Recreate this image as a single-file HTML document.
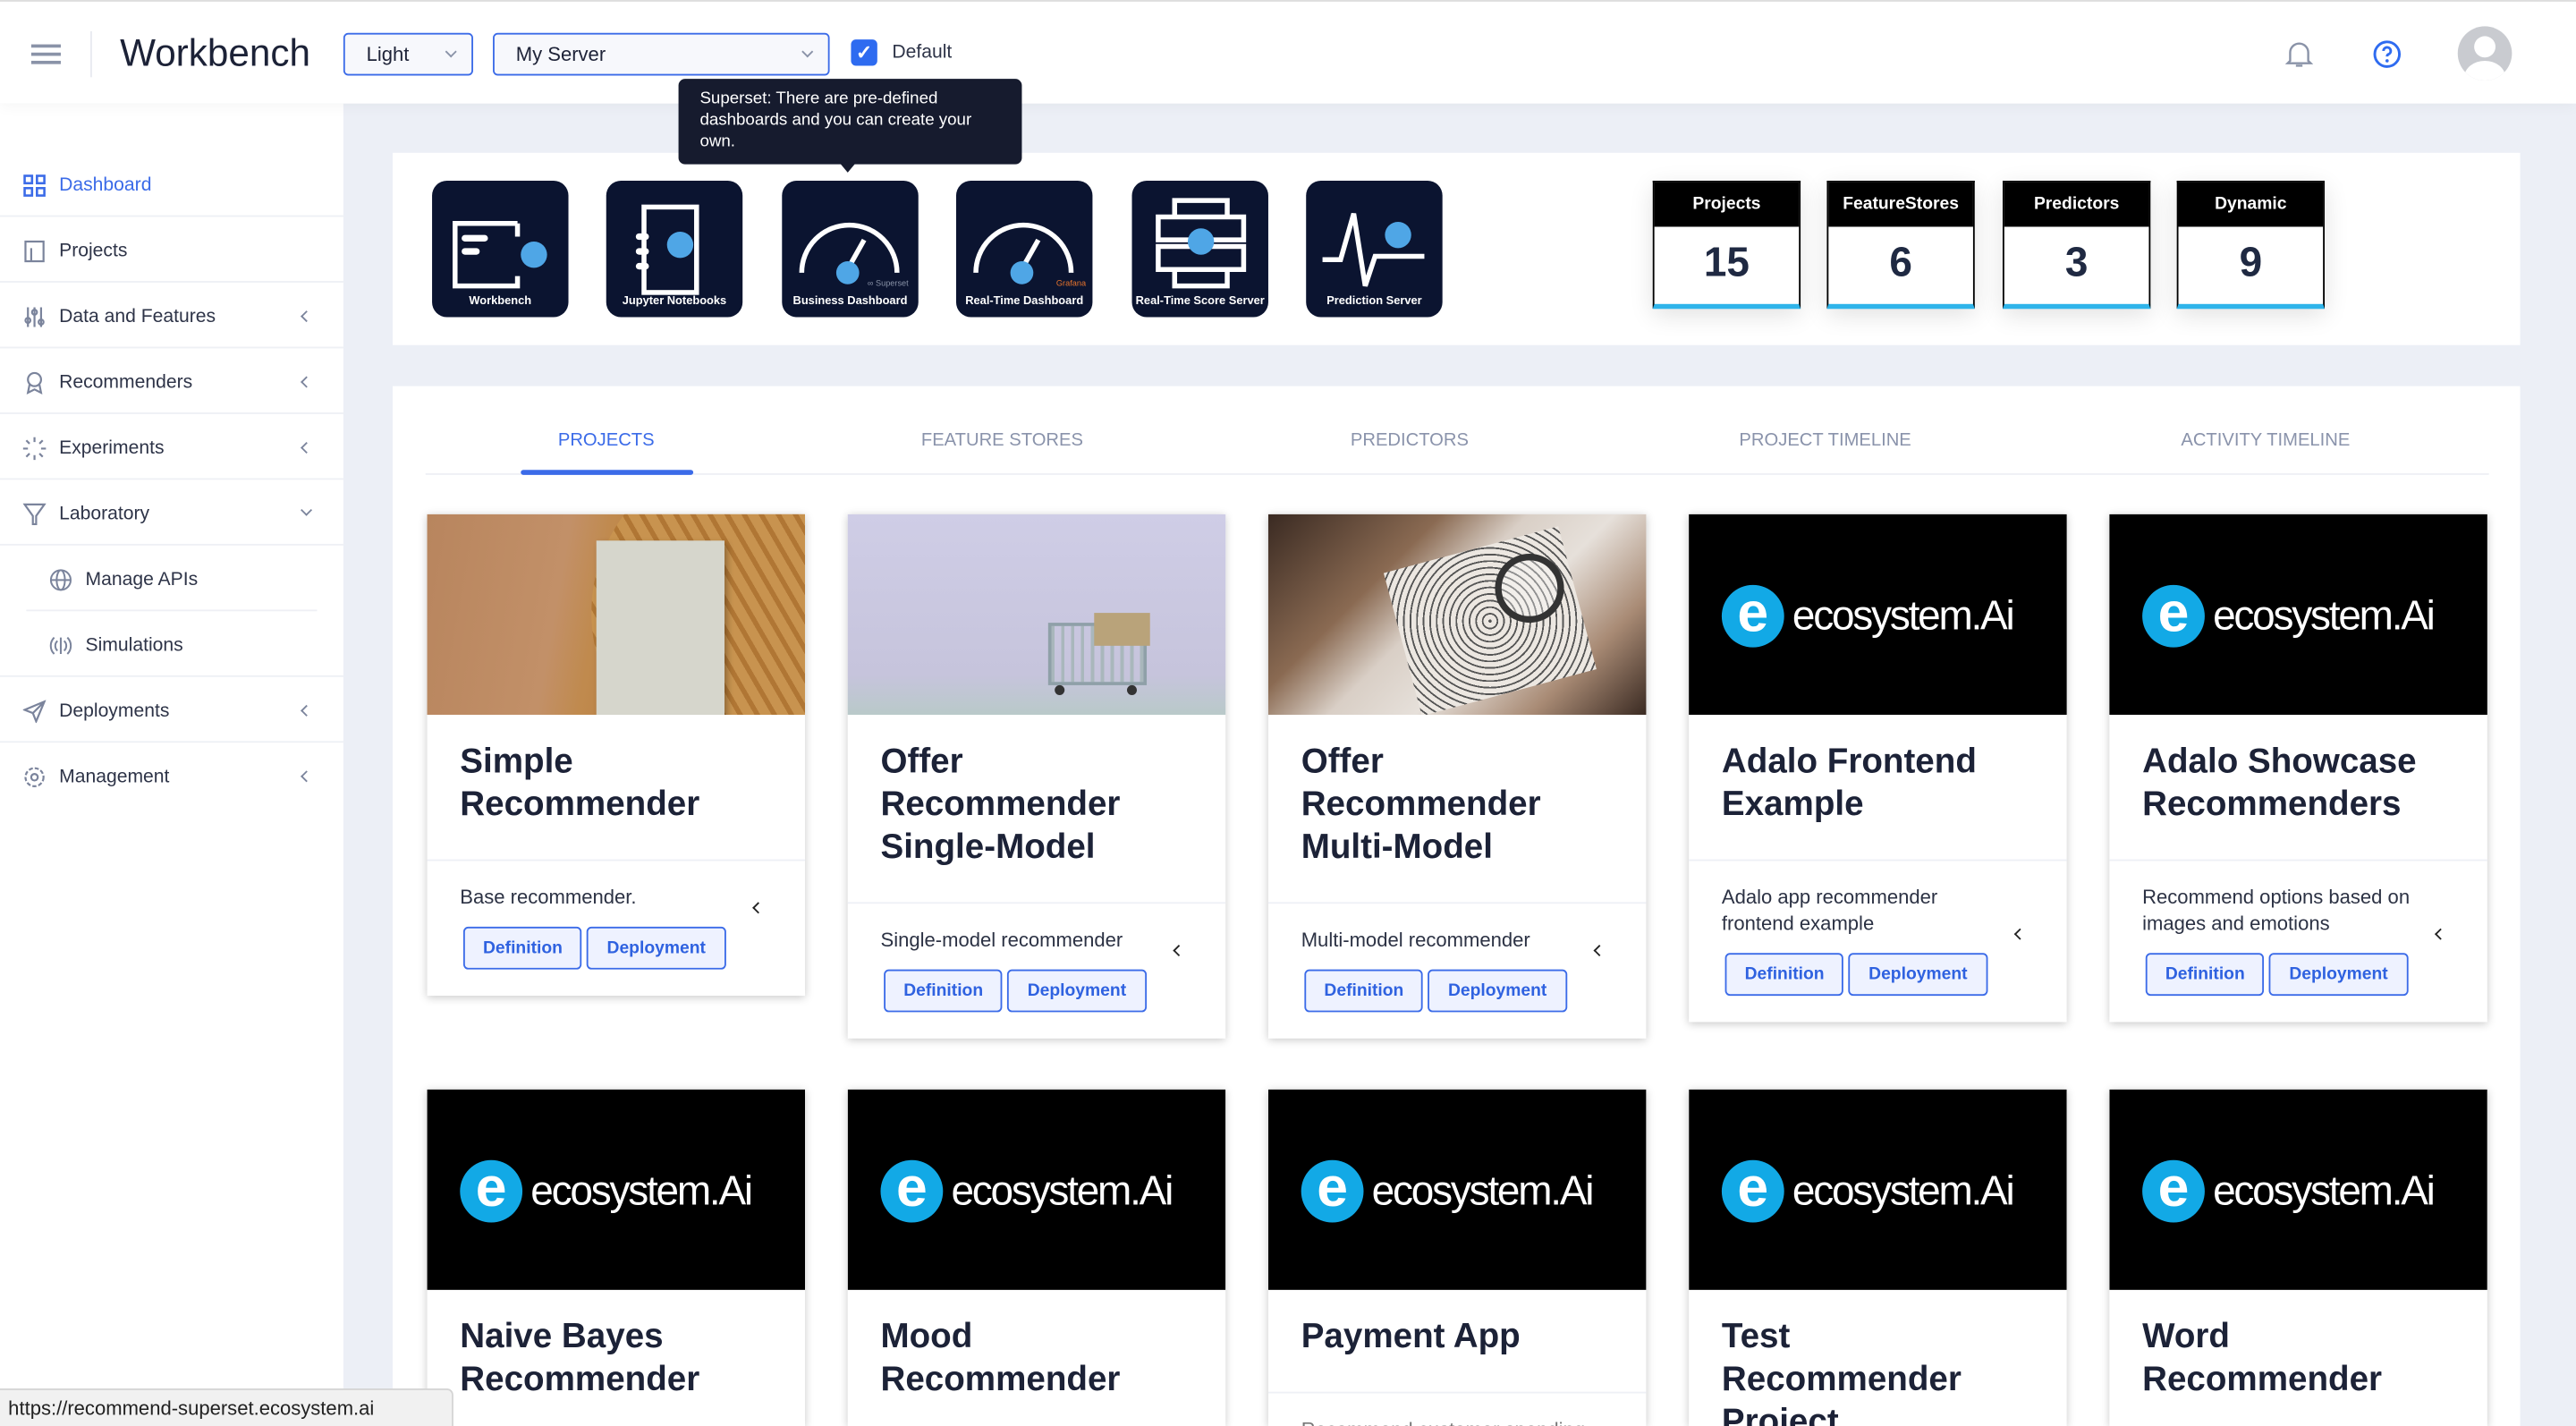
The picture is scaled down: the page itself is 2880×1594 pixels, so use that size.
<!DOCTYPE html>
<html><head><meta charset="utf-8"><style>
*{box-sizing:border-box;margin:0;padding:0}
html,body{width:2880px;height:1594px;overflow:hidden;background:#eceff6}
#w{position:absolute;left:0;top:0;width:1568px;height:868px;transform:scale(1.83674);transform-origin:0 0;font-family:"Liberation Sans",sans-serif;color:#1e2338;background:#eceff6;overflow:hidden}
.abs{position:absolute}
#hdr{left:0;top:0;width:1568px;height:63px;background:#fff;border-top:1px solid #ddd;box-shadow:0 2px 8px rgba(0,0,0,.04);z-index:2}
.sel{position:absolute;top:19px;height:26px;border:1px solid #3b6be8;border-radius:3px;background:#f7f8fc;font-size:12px;line-height:24px;padding-left:13px;color:#1e2338}
.sel:after{content:"";position:absolute;right:10px;top:8px;width:4px;height:4px;border-right:1px solid #8a93a8;border-bottom:1px solid #8a93a8;transform:rotate(45deg)}
#side{left:0;top:63px;width:209px;height:805px;background:#fff}
.si{position:absolute;left:0;width:209px;height:40px;border-bottom:1px solid #eef0f5;font-size:11.5px;line-height:42px;padding-left:36px;color:#2e3448}
.si .ic{position:absolute;left:14px;top:14px;width:14px;height:14px}
.si .ch{position:absolute;right:20px;top:18px;width:5px;height:5px;border-left:1.2px solid #7b849c;border-bottom:1.2px solid #7b849c;transform:rotate(45deg)}
.sub{padding-left:52px;left:0}
.panel{position:absolute;background:#fff;left:239px;width:1295px}
.tile{position:absolute;top:110px;width:83px;height:83px;background:#0b1430;border-radius:9px;color:#fff;font-size:7px;font-weight:bold;text-align:center}
.tile span{position:absolute;left:0;right:0;bottom:6px}
.stat{position:absolute;top:110px;width:90px;height:78px;background:#fff;border:1px solid #000;border-bottom:3px solid #2fb4ea;box-shadow:0 4px 14px rgba(0,0,0,.12)}
.stat .h{height:27px;background:#000;color:#fff;font-size:10.5px;font-weight:bold;text-align:center;line-height:27px}
.stat .n{text-align:center;font-size:25px;font-weight:bold;color:#1f2942;line-height:44px}
.tab{position:absolute;top:262px;font-size:11px;color:#8a93ab;transform:translateX(-50%);white-space:nowrap}
.card{position:absolute;width:230px;background:#fff;box-shadow:0 1px 5px rgba(0,0,0,.22)}
.card .img{height:122px;background:#000;position:relative;overflow:hidden}
.card h3{font-size:21px;line-height:26px;font-weight:bold;color:#1c2237;padding:16px 20px 0}
.card .sep{border-top:1px solid #eef0f6;margin-top:0}
.card .d{font-size:12px;color:#2c3244;padding:14px 20px 0;line-height:16px}
.btns{padding:10px 0 0 22px;height:52px;position:relative}
.b{display:inline-block;height:26px;border:1px solid #3b6be8;border-radius:3px;background:#eef2ff;color:#2f62e0;font-size:10.5px;font-weight:bold;line-height:24px;padding:0 11px;margin-right:3px}
.chev{position:absolute;right:26px;top:-4px;width:5px;height:5px;border-left:1.6px solid #222;border-bottom:1.6px solid #222;transform:rotate(45deg)}
.logo{position:absolute;left:20px;top:42px;height:40px;display:flex;align-items:center}
.logo .c{width:38px;height:38px;border-radius:50%;background:#12a9e6;color:#fff;font-size:34px;line-height:34px;text-align:center;font-weight:bold;font-family:"Liberation Sans",sans-serif}
.logo .t{color:#fff;font-size:25px;margin-left:5px;letter-spacing:-1.2px}
</style></head><body><div id="w">

<div id="hdr" class="abs">
 <div class="abs" style="left:19px;top:26px;width:18px;height:2px;background:#8a93a8;box-shadow:0 5px 0 #8a93a8,0 10px 0 #8a93a8"></div>
 <div class="abs" style="left:55px;top:18px;width:1px;height:28px;background:#e8eaf0"></div>
 <div class="abs" style="left:73px;top:18px;font-size:23px;color:#1c2237">Workbench</div>
 <div class="sel" style="left:209px;width:79px">Light</div>
 <div class="sel" style="left:300px;width:205px">My Server</div>
 <div class="abs" style="left:518px;top:23px;width:16px;height:16px;background:#2e6bf0;border-radius:3px;color:#fff;font-size:12px;text-align:center;line-height:16px;font-weight:bold">✓</div>
 <div class="abs" style="left:543px;top:25px;font-size:11.5px;color:#2e3448">Default</div>
 <svg class="abs" style="left:1391px;top:23px" width="17" height="18" viewBox="0 0 17 18"><path d="M3 13V8a5.5 5.5 0 0 1 11 0v5l1.5 1.5h-14z M6.5 16h4" fill="none" stroke="#8a93a8" stroke-width="1.3"/></svg>
 <svg class="abs" style="left:1444px;top:23px" width="18" height="18" viewBox="0 0 18 18"><circle cx="9" cy="9" r="7.5" fill="none" stroke="#2e6bf0" stroke-width="1.6"/><path d="M6.8 7a2.2 2.2 0 1 1 2.9 2.1c-.6.3-.7.7-.7 1.3" fill="none" stroke="#2e6bf0" stroke-width="1.6"/><circle cx="9" cy="13" r="1" fill="#2e6bf0"/></svg>
 <div class="abs" style="left:1496px;top:15px;width:33px;height:33px;border-radius:50%;background:#c9cbd0;overflow:hidden"><div class="abs" style="left:10px;top:6px;width:13px;height:13px;border-radius:50%;background:#fff"></div><div class="abs" style="left:4px;top:21px;width:25px;height:20px;border-radius:50%;background:#fff"></div></div>
</div>

<div id="side" class="abs">
 <div class="si" style="top:29px;color:#3b6be8"><svg class="ic" viewBox="0 0 14 14"><g fill="none" stroke="#3b6be8" stroke-width="1.4"><rect x="1" y="1" width="4.5" height="4.5"/><rect x="8.5" y="1" width="4.5" height="4.5"/><rect x="1" y="8.5" width="4.5" height="4.5"/><rect x="8.5" y="8.5" width="4.5" height="4.5"/></g></svg>Dashboard</div>
 <div class="si" style="top:69px"><svg class="ic" viewBox="0 0 14 14"><g fill="none" stroke="#7b849c" stroke-width="1.2"><rect x="1.5" y="1" width="11" height="12"/><path d="M5 5v8"/></g></svg>Projects</div>
 <div class="si" style="top:109px"><svg class="ic" viewBox="0 0 14 14"><g fill="none" stroke="#7b849c" stroke-width="1.2"><path d="M3 1v12M7 1v12M11 1v12"/><circle cx="3" cy="9" r="1.5"/><circle cx="7" cy="4" r="1.5"/><circle cx="11" cy="10" r="1.5"/></g></svg>Data and Features<span class="ch"></span></div>
 <div class="si" style="top:149px"><svg class="ic" viewBox="0 0 14 14"><g fill="none" stroke="#7b849c" stroke-width="1.2"><circle cx="7" cy="5" r="4"/><path d="M4 8l-1 5 4-2 4 2-1-5"/></g></svg>Recommenders<span class="ch"></span></div>
 <div class="si" style="top:189px"><svg class="ic" viewBox="0 0 14 14"><g stroke="#7b849c" stroke-width="1.2"><path d="M7 0v3M7 11v3M0 7h3M11 7h3M2 2l2 2M10 10l2 2M12 2l-2 2M4 10l-2 2"/></g></svg>Experiments<span class="ch"></span></div>
 <div class="si" style="top:229px"><svg class="ic" viewBox="0 0 14 14"><path d="M1 1h12L8 8v5H6V8z" fill="none" stroke="#7b849c" stroke-width="1.2"/></svg>Laboratory<span class="ch" style="transform:rotate(-45deg);top:16px"></span></div>
 <div class="si sub" style="top:269px;border:none"><svg class="ic" style="left:30px" viewBox="0 0 14 14"><g fill="none" stroke="#7b849c" stroke-width="1.1"><circle cx="7" cy="7" r="6"/><ellipse cx="7" cy="7" rx="2.5" ry="6"/><path d="M1 7h12"/></g></svg>Manage APIs</div>
 <div class="abs" style="left:16px;top:308px;width:177px;border-top:1px solid #eef0f5"></div>
 <div class="si sub" style="top:309px"><svg class="ic" style="left:30px" viewBox="0 0 14 14"><g fill="none" stroke="#7b849c" stroke-width="1.1"><path d="M3 2a7 7 0 0 0 0 10M11 2a7 7 0 0 1 0 10M5 4a4 4 0 0 0 0 6M9 4a4 4 0 0 1 0 6M7 2v10"/></g></svg>Simulations</div>
 <div class="si" style="top:349px"><svg class="ic" viewBox="0 0 14 14"><path d="M13 1L1 6l5 2 2 5z M6 8l7-7" fill="none" stroke="#7b849c" stroke-width="1.2"/></svg>Deployments<span class="ch"></span></div>
 <div class="si" style="top:389px;border:none"><svg class="ic" viewBox="0 0 14 14"><g fill="none" stroke="#7b849c" stroke-width="1.2"><circle cx="7" cy="7" r="2"/><circle cx="7" cy="7" r="5.5" stroke-dasharray="2.5 1.2"/></g></svg>Management<span class="ch"></span></div>
</div>

<div class="panel" style="top:93px;height:117px"></div>
<div class="tile" style="left:263px"><svg class="abs" style="left:12px;top:24px" width="62" height="42" viewBox="0 0 62 42"><path d="M40 2H2v38h38v-6" fill="none" stroke="#fff" stroke-width="3"/><path d="M40 2v8" stroke="#fff" stroke-width="3"/><rect x="6" y="9" width="16" height="4" rx="2" fill="#fff"/><rect x="6" y="17" width="11" height="4" rx="2" fill="#fff"/><ellipse cx="50" cy="21" rx="8" ry="8" fill="#4fa6e6"/></svg><span>Workbench</span></div>
<div class="tile" style="left:369px"><svg class="abs" style="left:14px;top:14px" width="56" height="56" viewBox="0 0 56 56"><rect x="9" y="2" width="32" height="52" fill="none" stroke="#fff" stroke-width="3"/><rect x="4" y="18" width="8" height="4" rx="2" fill="#fff"/><rect x="4" y="27" width="8" height="4" rx="2" fill="#fff"/><rect x="4" y="36" width="8" height="4" rx="2" fill="#fff"/><circle cx="31" cy="25" r="8" fill="#4fa6e6"/></svg><span>Jupyter Notebooks</span></div>
<div class="tile" style="left:476px"><svg class="abs" style="left:6px;top:10px" width="70" height="56" viewBox="0 0 70 56"><path d="M6 46A29 29 0 0 1 64 46" fill="none" stroke="#fff" stroke-width="3"/><path d="M35 42l9-16" stroke="#fff" stroke-width="3"/><circle cx="34" cy="46" r="7" fill="#4fa6e6"/></svg><div class="abs" style="right:6px;bottom:17px;font-size:5px;color:#8a93a8;font-weight:normal">∞ Superset</div><span>Business Dashboard</span></div>
<div class="tile" style="left:582px"><svg class="abs" style="left:6px;top:10px" width="70" height="56" viewBox="0 0 70 56"><path d="M6 46A29 29 0 0 1 64 46" fill="none" stroke="#fff" stroke-width="3"/><path d="M35 42l9-16" stroke="#fff" stroke-width="3"/><circle cx="34" cy="46" r="7" fill="#4fa6e6"/></svg><div class="abs" style="right:4px;bottom:17px;font-size:5px;color:#e8742c;font-weight:normal">Grafana</div><span>Real-Time Dashboard</span></div>
<div class="tile" style="left:689px"><svg class="abs" style="left:12px;top:10px" width="60" height="56" viewBox="0 0 60 56"><g fill="none" stroke="#fff" stroke-width="3"><path d="M14 2h32v10H14zM4 12h52v14H4zM4 30h52v14H4zM14 44h32v10H14z"/></g><circle cx="30" cy="27" r="8" fill="#4fa6e6"/></svg><span>Real-Time Score Server</span></div>
<div class="tile" style="left:795px"><svg class="abs" style="left:8px;top:14px" width="66" height="56" viewBox="0 0 66 56"><path d="M2 34h11l8-28 7 44 6-18h30" fill="none" stroke="#fff" stroke-width="3"/><circle cx="48" cy="19" r="8" fill="#4fa6e6"/></svg><span>Prediction Server</span></div>

<div class="stat" style="left:1006px"><div class="h">Projects</div><div class="n">15</div></div>
<div class="stat" style="left:1112px"><div class="h">FeatureStores</div><div class="n">6</div></div>
<div class="stat" style="left:1219px"><div class="h">Predictors</div><div class="n">3</div></div>
<div class="stat" style="left:1325px"><div class="h">Dynamic</div><div class="n">9</div></div>

<div class="abs" style="left:413px;top:48px;width:209px;height:52px;background:#161b2e;border-radius:4px;color:#fff;font-size:10.2px;line-height:13px;padding:6px 12px 0 13px;z-index:3">Superset: There are pre-defined dashboards and you can create your own.</div>
<div class="abs" style="left:511px;top:99px;border-left:5px solid transparent;border-right:5px solid transparent;border-top:6px solid #161b2e;z-index:3"></div>

<div class="panel" style="top:235px;height:633px"></div>
<div class="abs" style="left:259px;top:288px;width:1256px;border-top:1px solid #eef0f5"></div>
<div class="tab" style="left:369px;color:#3b6be8">PROJECTS</div>
<div class="abs" style="left:317px;top:286px;width:105px;height:3px;background:#3b6be8;border-radius:2px"></div>
<div class="tab" style="left:610px">FEATURE STORES</div>
<div class="tab" style="left:858px">PREDICTORS</div>
<div class="tab" style="left:1111px">PROJECT TIMELINE</div>
<div class="tab" style="left:1379px">ACTIVITY TIMELINE</div>

<!-- row 1 -->
<div class="card" style="left:260px;top:313px"><div class="img" style="background:linear-gradient(100deg,#b8855e 0%,#c29068 35%,#c08a4e 45%,#b57a3a 70%,#a66a2c 100%)"><div class="abs" style="left:100px;top:-40px;width:200px;height:200px;border-radius:50%;background:repeating-linear-gradient(60deg,#c8934f 0 6px,#b07634 6px 9px)"></div><div class="abs" style="left:103px;top:16px;width:78px;height:131px;background:#d6d6cc;box-shadow:2px 2px 4px rgba(0,0,0,.3)"></div></div><h3>Simple<br>Recommender</h3><div style="height:20px"></div><div class="sep"></div><div class="d">Base recommender.</div><div class="btns"><span class="b">Definition</span><span class="b">Deployment</span><span class="chev"></span></div></div>

<div class="card" style="left:516px;top:313px"><div class="img" style="background:linear-gradient(180deg,#cfcde6 0%,#c6c4dc 80%,#b9c9c9 100%)"><div class="abs" style="left:122px;top:66px;width:60px;height:38px;border:2px solid #8fa0a8;background:repeating-linear-gradient(90deg,#a9b7bc 0 2px,transparent 2px 6px)"></div><div class="abs" style="left:150px;top:60px;width:34px;height:20px;background:#b9a37a"></div><div class="abs" style="left:126px;top:104px;width:6px;height:6px;border-radius:50%;background:#333;box-shadow:44px 0 0 #333"></div></div><h3>Offer<br>Recommender<br>Single-Model</h3><div style="height:20px"></div><div class="sep"></div><div class="d">Single-model recommender</div><div class="btns"><span class="b">Definition</span><span class="b">Deployment</span><span class="chev"></span></div></div>

<div class="card" style="left:772px;top:313px"><div class="img" style="background:linear-gradient(135deg,#3a2a22 0%,#8a6a52 30%,#d9cfc6 45%,#e6e0da 60%,#a88a74 80%,#3a2a22 100%)"><div class="abs" style="left:80px;top:20px;width:110px;height:90px;background:repeating-radial-gradient(circle,#555 0 1px,#ece7e1 1px 4px);transform:rotate(-15deg)"></div><div class="abs" style="left:138px;top:24px;width:42px;height:42px;border-radius:50%;border:4px solid #333;background:rgba(255,255,255,.35)"></div></div><h3>Offer<br>Recommender<br>Multi-Model</h3><div style="height:20px"></div><div class="sep"></div><div class="d">Multi-model recommender</div><div class="btns"><span class="b">Definition</span><span class="b">Deployment</span><span class="chev"></span></div></div>

<div class="card" style="left:1028px;top:313px"><div class="img"><div class="logo"><div class="c">e</div><div class="t">ecosystem.Ai</div></div></div><h3>Adalo Frontend<br>Example</h3><div style="height:20px"></div><div class="sep"></div><div class="d">Adalo app recommender<br>frontend example</div><div class="btns"><span class="b">Definition</span><span class="b">Deployment</span><span class="chev"></span></div></div>

<div class="card" style="left:1284px;top:313px"><div class="img"><div class="logo"><div class="c">e</div><div class="t">ecosystem.Ai</div></div></div><h3>Adalo Showcase<br>Recommenders</h3><div style="height:20px"></div><div class="sep"></div><div class="d">Recommend options based on<br>images and emotions</div><div class="btns"><span class="b">Definition</span><span class="b">Deployment</span><span class="chev"></span></div></div>

<!-- row 2 -->
<div class="card" style="left:260px;top:663px;height:205px;overflow:hidden"><div class="img"><div class="logo"><div class="c">e</div><div class="t">ecosystem.Ai</div></div></div><h3>Naive Bayes<br>Recommender</h3></div>
<div class="card" style="left:516px;top:663px;height:205px;overflow:hidden"><div class="img"><div class="logo"><div class="c">e</div><div class="t">ecosystem.Ai</div></div></div><h3>Mood<br>Recommender</h3></div>
<div class="card" style="left:772px;top:663px;height:205px;overflow:hidden"><div class="img"><div class="logo"><div class="c">e</div><div class="t">ecosystem.Ai</div></div></div><h3>Payment App</h3><div style="height:20px"></div><div class="sep"></div><div class="d" style="color:#777">Recommend customer spending</div></div>
<div class="card" style="left:1028px;top:663px;height:205px;overflow:hidden"><div class="img"><div class="logo"><div class="c">e</div><div class="t">ecosystem.Ai</div></div></div><h3>Test<br>Recommender<br>Project</h3></div>
<div class="card" style="left:1284px;top:663px;height:205px;overflow:hidden"><div class="img"><div class="logo"><div class="c">e</div><div class="t">ecosystem.Ai</div></div></div><h3>Word<br>Recommender</h3></div>

<div class="abs" style="left:0;top:845px;width:276px;height:23px;background:#f1f1f1;border:1px solid #d4d4d4;border-left:none;border-bottom:none;border-radius:0 4px 0 0;font-size:12px;line-height:22px;padding-left:5px;color:#222">https://recommend-superset.ecosystem.ai</div>
</div></body></html>
